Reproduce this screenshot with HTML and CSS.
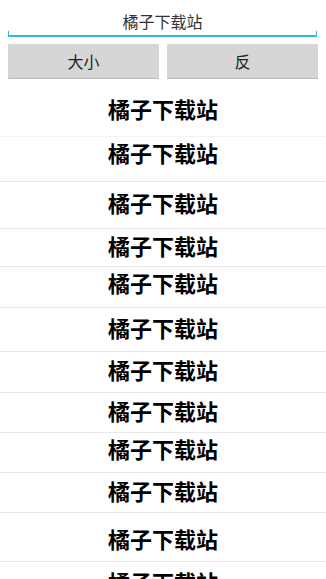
FILE: index.html
```html
<!DOCTYPE html>
<html lang="zh">
<head>
<meta charset="utf-8">
<link rel="stylesheet" href="styles.css">
</head>
<body>
<div class="top">
  <div class="edit">橘子下载站</div>
  <div class="buttons">
    <div class="btn">大小</div>
    <div class="btn">反</div>
  </div>
</div>
<ul class="list">
  <li class="row r1">橘子下载站</li>
  <li class="row r2">橘子下载站</li>
  <li class="row r3">橘子下载站</li>
  <li class="row r4">橘子下载站</li>
  <li class="row r5">橘子下载站</li>
  <li class="row r6">橘子下载站</li>
  <li class="row r7">橘子下载站</li>
  <li class="row r8">橘子下载站</li>
  <li class="row r9">橘子下载站</li>
  <li class="row r10">橘子下载站</li>
  <li class="row r11">橘子下载站</li>
  <li class="row r12">橘子下载站</li>
</ul>
</body>
</html>
```
FILE: styles.css
```css
html, body {
  margin: 0;
  padding: 0;
  background: #ffffff;
  overflow: hidden;
  height: 579px;
}
body {
  font-family: "Noto Sans CJK SC", "Noto Sans", sans-serif;
  color: #000;
}
.top {
  padding: 8px 8px 0 8px;
}
.edit {
  position: relative;
  padding: 3px 0 4px;
  line-height: 20px;
  font-size: 16px;
  color: #333333;
  text-align: center;
  border-bottom: 2px solid #33b5e5;
  margin-right: 1px;
}
.edit::before,
.edit::after {
  content: "";
  position: absolute;
  bottom: 0;
  width: 1px;
  height: 4px;
  background: #33b5e5;
}
.edit::before { left: 0; }
.edit::after { right: 0; }
.buttons {
  display: flex;
  gap: 8px;
  margin-top: 7px;
  height: 35px;
}
.btn {
  flex: 1;
  background: #d6d6d6;
  border-bottom: 1px solid #bcbcbc;
  box-sizing: border-box;
  display: flex;
  align-items: center;
  justify-content: center;
  font-size: 16px;
  color: #222222;
  border-radius: 1px;
}
.list {
  list-style: none;
  margin: 5px 0 0;
  padding: 0;
}
.row {
  text-align: center;
  font-size: 22px;
  line-height: 26px;
  font-weight: bold;
  color: #000;
  border-bottom: 1px solid #e9e9e9;
}
.r1 { padding: 11px 0 15px; border-bottom-color: #f3f3f3; }
.r2 { padding: 2px 0 16px; }
.r3 { padding: 7px 0 13px; }
.r4 { padding: 3px 0 8px; }
.r5 { padding: 2px 0 12px; }
.r6 { padding: 6px 0 11px; }
.r7 { padding: 4px 0 10px; }
.r8 { padding: 4px 0 9px; }
.r9 { padding: 2px 0 11px; }
.r10 { padding: 4px 0 9px; }
.r11 { padding: 12px 0 10px; }
.r12 { padding: 6px 0 8px; }
```
